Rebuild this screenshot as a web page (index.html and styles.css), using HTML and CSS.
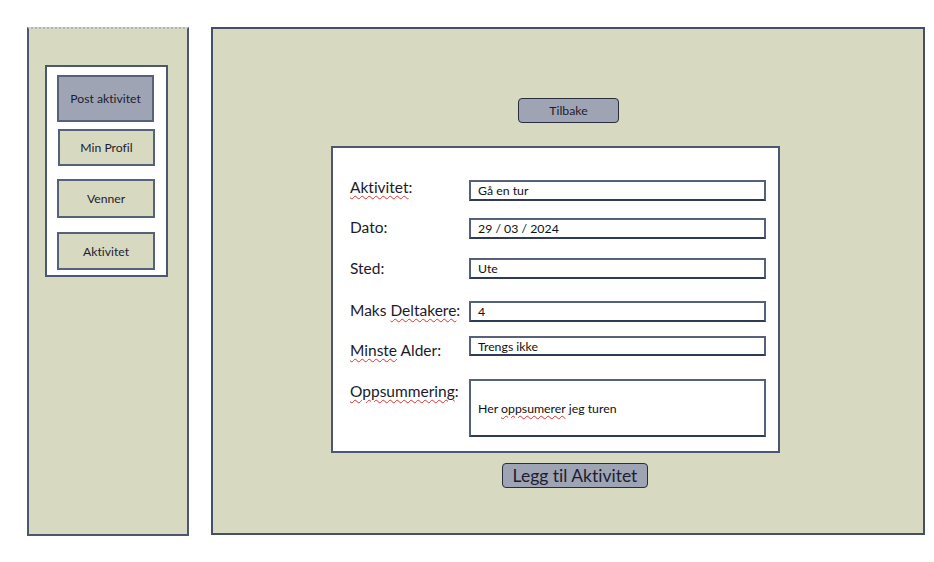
FILE: index.html
```html
<!DOCTYPE html>
<html lang="no">
<head>
<meta charset="utf-8">
<title>Post aktivitet</title>
<link rel="stylesheet" href="styles.css">
</head>
<body>
<div class="page">
  <aside class="sidebar">
    <nav class="menu">
      <div class="nav-btn active">Post aktivitet</div>
      <div class="nav-btn b2">Min Profil</div>
      <div class="nav-btn b3">Venner</div>
      <div class="nav-btn b4">Aktivitet</div>
    </nav>
  </aside>
  <main class="main">
    <div class="back-wrap"><div class="back-btn">Tilbake</div></div>
    <form class="card">
      <div class="row r1"><span class="label l1"><span class="sq">Aktivitet</span>:</span><div class="field"><span>Gå en tur</span></div></div>
      <div class="row r2"><span class="label l2">Dato:</span><div class="field"><span>29 / 03 / 2024</span></div></div>
      <div class="row r3"><span class="label l3">Sted:</span><div class="field"><span>Ute</span></div></div>
      <div class="row r4"><span class="label l4">Maks <span class="sq">Deltakere</span>:</span><div class="field"><span>4</span></div></div>
      <div class="row r5"><span class="label l5"><span class="sq">Minste</span> Alder:</span><div class="field f5"><span>Trengs ikke</span></div></div>
      <div class="row r6"><span class="label l6"><span class="sq">Oppsummering</span>:</span><div class="field area"><span>Her <span class="sq">oppsumerer</span> jeg turen</span></div></div>
    </form>
    <div class="submit-wrap"><div class="submit-btn">Legg til Aktivitet</div></div>
  </main>
</div>
</body>
</html>
```
FILE: styles.css
```css
* { box-sizing: border-box; }
html, body { margin: 0; padding: 0; background: #ffffff; }
body {
  font-family: Lato, "Open Sans", sans-serif;
  color: #1d1d30;
  font-variant-ligatures: none;
}

.page {
  display: flex;
  gap: 22px;
  padding: 27px 0 0 27px;
}

.sidebar {
  width: 162px;
  height: 509px;
  background: #d7d9c1;
  border: 2px solid #4a5672;
  border-top: 2px dotted #b4b4b4;
  padding: 36px 0 0 16px;
}

.menu {
  width: 123px;
  height: 212px;
  background: #ffffff;
  border: 2px solid #4c5870;
  padding: 8px 0 0 10px;
  display: flex;
  flex-direction: column;
}

.nav-btn {
  width: 97px;
  background: #d7d9c1;
  border: 2px solid #56627a;
  font-size: 12.2px;
  display: flex;
  align-items: center;
  justify-content: center;
  color: #1d1d30;
}
.nav-btn.active { height: 47px; background: #9fa4b4; }
.nav-btn.b2 { height: 37px; margin-top: 7px; margin-left: 1px; }
.nav-btn.b3 { height: 39px; margin-top: 13px; width: 98px; }
.nav-btn.b4 { height: 38px; margin-top: 14px; width: 98px; }

.main {
  width: 714px;
  height: 508px;
  background: #d7d9c1;
  border: 2px solid #44506a;
  padding-top: 69px;
}

.back-wrap { display: flex; justify-content: center; }
.back-btn {
  width: 101px;
  height: 25px;
  background: #9fa4b4;
  border: 1.5px solid #2a2e3a;
  border-radius: 4px;
  font-size: 12.3px;
  display: flex;
  align-items: center;
  justify-content: center;
  margin-left: 1px;
}

.card {
  margin: 23px 0 0 118px;
  width: 449px;
  height: 307px;
  background: #ffffff;
  border: 2px solid #4c5870;
  padding: 0 0 0 17px;
}

.row { display: flex; align-items: flex-start; }
.label {
  width: 119px;
  flex: none;
  font-size: 15.5px;
  line-height: 20px;
  white-space: nowrap;
  color: #1a1a2c;
}
.field {
  width: 297px;
  height: 21px;
  border: 2px solid #56627c;
  border-bottom-color: #2e3a56;
  font-size: 12.3px;
  padding-left: 7px;
  display: flex;
  align-items: center;
  color: #111;
}
.field.f5 { height: 20px; }
.field.area { height: 58px; }

.r1 { margin-top: 32px; }
.r2 { margin-top: 17px; }
.r3 { margin-top: 19px; }
.r4 { margin-top: 22px; }
.r5 { margin-top: 14px; }
.r6 { margin-top: 19px; }

.l1 { margin-top: -3px; }
.l2 { margin-top: -1px; }
.l3 { margin-top: 0; }
.l4 { margin-top: -1px; }
.l5 { margin-top: 4px; }
.l6 { margin-top: 2px; }

.sq {
  text-decoration: underline wavy #e03030;
  text-decoration-thickness: 1px;
  text-underline-offset: 2px;
}

.submit-wrap { display: flex; padding-left: 289px; margin-top: 10px; }
.submit-btn {
  width: 146px;
  height: 25px;
  background: #9fa4b4;
  border: 1.5px solid #2a2e3a;
  border-radius: 4px;
  font-size: 17.5px;
  display: flex;
  align-items: center;
  justify-content: center;
}
```
